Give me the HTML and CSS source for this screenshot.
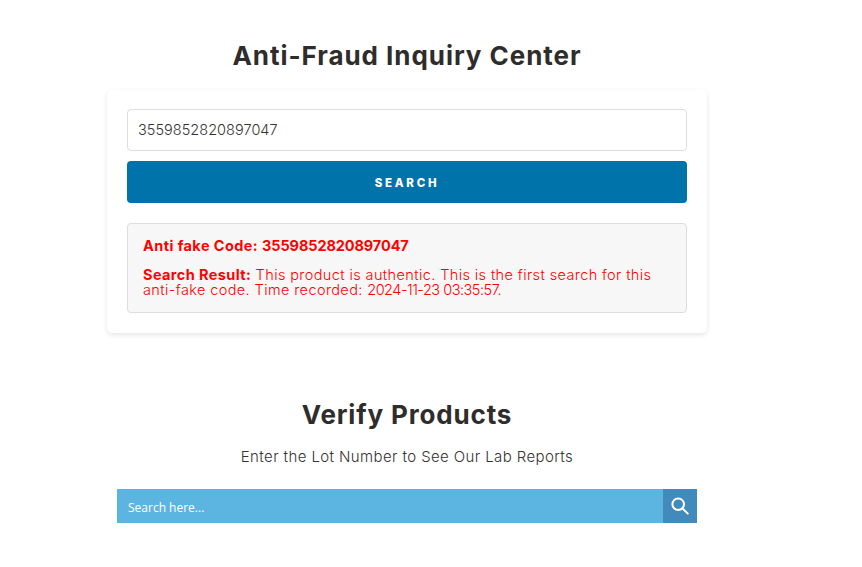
FILE: index.html
```html
<!DOCTYPE html>
<html lang="en">
<head>
<meta charset="utf-8">
<title>Anti-Fraud Inquiry Center</title>
<link rel="stylesheet" href="styles.css">
</head>
<body>
<main class="page">
  <h1 class="title">Anti-Fraud Inquiry Center</h1>
  <section class="card">
    <form class="query">
      <input class="code-input" type="text" value="3559852820897047">
      <button class="search-btn" type="button">SEARCH</button>
    </form>
    <div class="result">
      <p class="code-line">Anti fake Code: <span class="digits">3559852820897047</span></p>
      <p class="result-line"><strong>Search Result:</strong> This product is authentic. This is the first search for this anti-fake code. Time recorded: <span class="stamp">2024-11-23 03:35:57.</span></p>
    </div>
  </section>
  <section class="verify">
    <h2 class="verify-title">Verify Products</h2>
    <p class="verify-sub">Enter the Lot Number to See Our Lab Reports</p>
    <form class="lot-search">
      <input class="lot-input" type="text" placeholder="Search here...">
      <button class="lot-btn" type="button" aria-label="Search">
        <svg viewBox="0 0 18 18" width="18" height="18" fill="none" stroke="#fff" stroke-width="2" stroke-linecap="round"><circle cx="7.2" cy="7.2" r="5.8"/><path d="M11.5 11.5 16.8 16.6"/></svg>
      </button>
    </form>
  </section>
</main>
</body>
</html>
```
FILE: styles.css
```css
* { box-sizing: border-box; }
html, body { margin: 0; padding: 0; background: #fff; }
body { font-family: Inter, "Liberation Sans", sans-serif; color: #333; height: 567px; overflow: hidden; }
.page { width: 600px; margin-left: 107px; padding-top: 39px; }
.title { margin: 0 0 18px; height: 33px; line-height: 33px; font-size: 26px; font-weight: 700; letter-spacing: 0.95px; text-align: center; color: #2f2d2c; }
.card { height: 243px; padding: 19px 20px 20px; background: #fff; border-radius: 5px; box-shadow: 0 2px 5px rgba(0,0,0,.1); }
.query { display: flex; flex-direction: column; gap: 10px; }
.code-input { width: 100%; height: 42px; padding: 0 10px 2px; border: 1px solid #ddd; border-radius: 4px; font: 300 14.5px Inter, sans-serif; letter-spacing: 0.03px; color: #333; background: #fff; }
.search-btn { height: 42px; padding: 2px 0 0; border: 0; border-radius: 4px; background: #0073aa; color: #fff; font: 800 11.5px Inter, sans-serif; letter-spacing: 2.7px; }
.result { height: 90px; margin-top: 20px; padding: 13px 15px; background: #f7f7f7; border: 1px solid #ddd; border-radius: 4px; color: #f00; font-size: 14.5px; }
.code-line { margin: 0 0 12px; height: 18px; line-height: 18px; font-weight: 700; letter-spacing: 0.42px; }
.digits { letter-spacing: -0.1px; }
.result-line { margin: 0; line-height: 15px; font-weight: 300; letter-spacing: 0.39px; }
.result-line strong { font-weight: 700; }
.stamp { letter-spacing: -0.5px; }
.verify { margin-top: 65px; }
.verify-title { margin: 0 0 15px; height: 34px; line-height: 34px; font-size: 26px; font-weight: 700; letter-spacing: 0.85px; text-align: center; color: #2f2d2c; }
.verify-sub { margin: 0 0 22px; height: 20px; line-height: 20px; font-size: 15px; font-weight: 300; letter-spacing: 0.4px; text-align: center; color: #333; }
.lot-search { display: flex; width: 580px; height: 34px; margin-left: 10px; }
.lot-input { flex: 1; min-width: 0; padding: 2px 11px 0; border: 0; background: #5cb5e0; color: #fff; font: 400 12px "Open Sans", sans-serif; outline: 0; }
.lot-input::placeholder { color: #fff; opacity: 1; }
.lot-btn { display: flex; align-items: center; justify-content: center; width: 34px; border: 0; padding: 0; background: #4289bc; }
```
